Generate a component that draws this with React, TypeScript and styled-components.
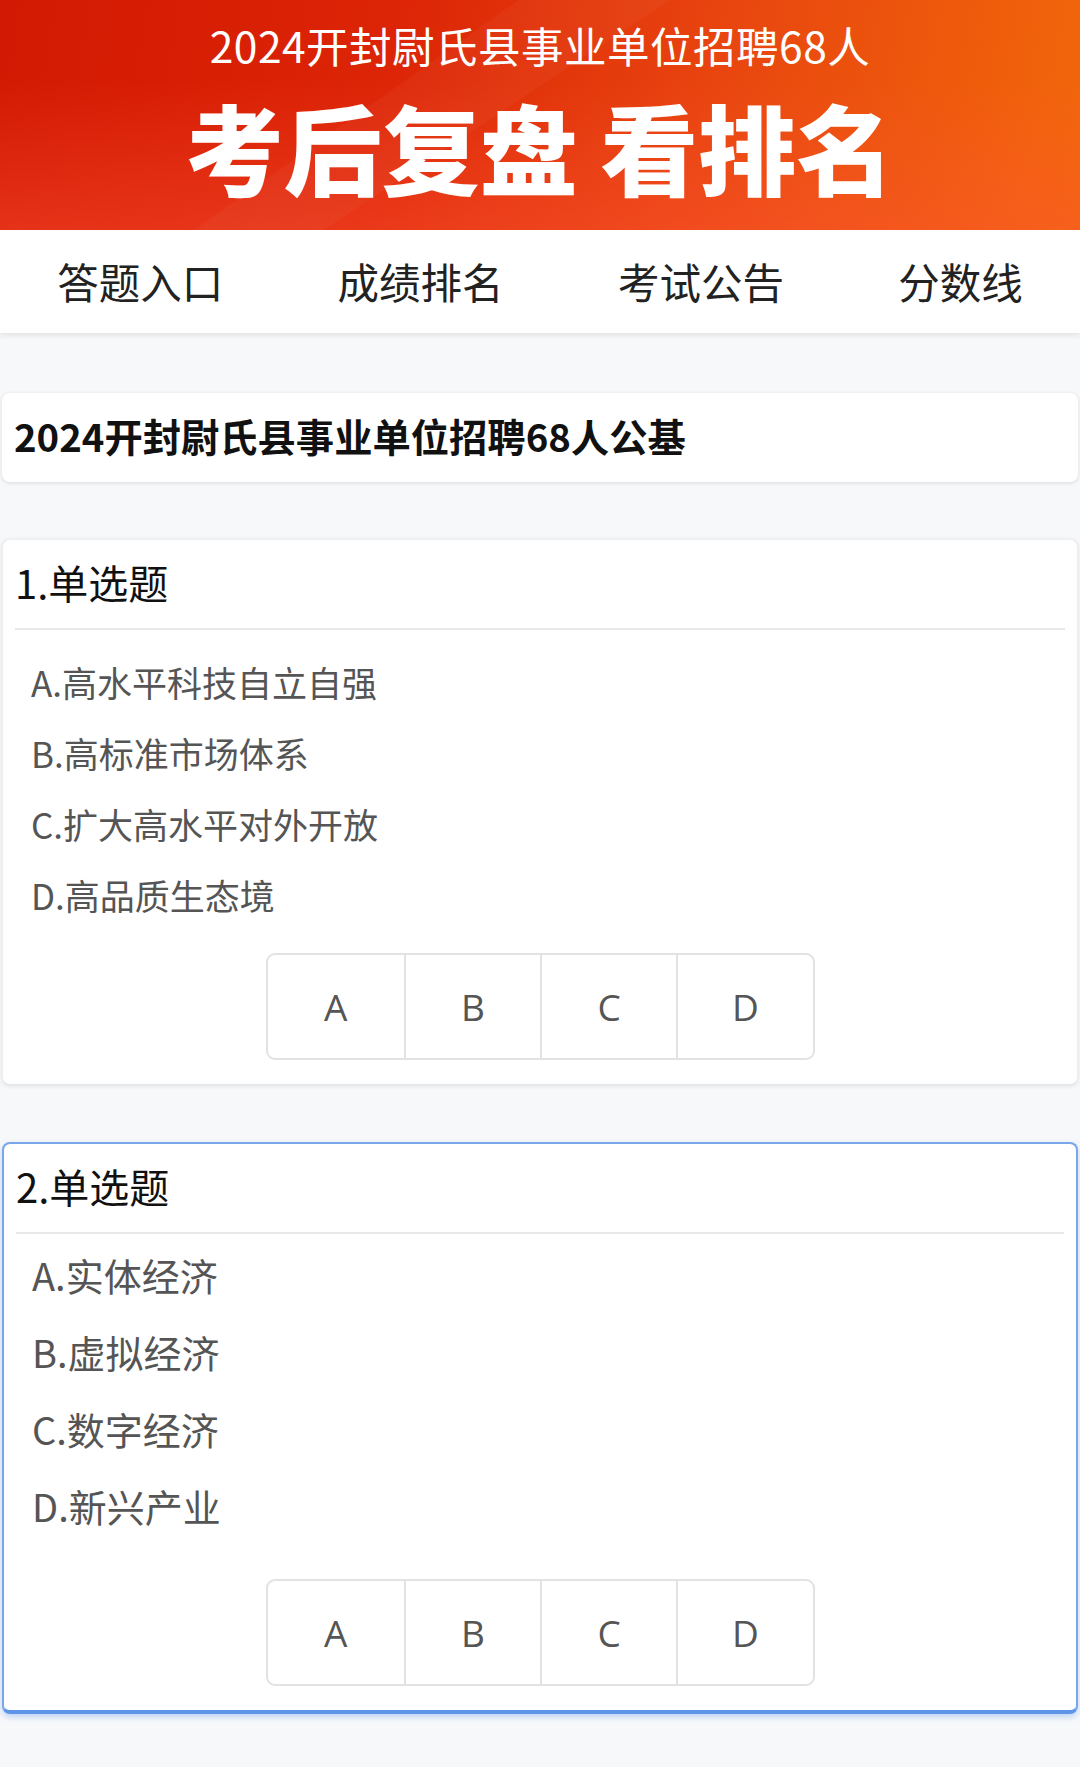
import React from 'react';
import styled, { createGlobalStyle } from 'styled-components';

const GlobalStyle = createGlobalStyle`
  * { box-sizing: border-box; }
  body {
    margin: 0;
    background: #f7f8fa;
    font-family: "Noto Sans CJK SC", "Noto Sans", sans-serif;
  }
`;

type Question = {
  no: number;
  options: string[];
  optSize: number;
  rowHeight: number;
  listTop: number;
  listBottom: number;
  active?: boolean;
};

const questions: Question[] = [
  {
    no: 1,
    options: ['A.高水平科技自立自强', 'B.高标准市场体系', 'C.扩大高水平对外开放', 'D.高品质生态境'],
    optSize: 35,
    rowHeight: 71,
    listTop: 16,
    listBottom: 23,
  },
  {
    no: 2,
    options: ['A.实体经济', 'B.虚拟经济', 'C.数字经济', 'D.新兴产业'],
    optSize: 38,
    rowHeight: 77,
    listTop: 2,
    listBottom: 35,
    active: true,
  },
];

const tabs = ['答题入口', '成绩排名', '考试公告', '分数线'];

export default function App() {
  return (
    <Page>
      <GlobalStyle />
      <Banner>
        <Facet />
        <BannerSub>2024开封尉氏县事业单位招聘68人</BannerSub>
        <BannerTitle>考后复盘 看排名</BannerTitle>
      </Banner>

      <Nav>
        {tabs.map((t) => (
          <NavItem key={t}>{t}</NavItem>
        ))}
      </Nav>

      <Body>
        <TitleCard>2024开封尉氏县事业单位招聘68人公基</TitleCard>

        {questions.map((q) => (
          <QuestionCard key={q.no} $active={q.active}>
            <QHead>{q.no}.单选题</QHead>
            <Divider />
            <OptionList $top={q.listTop} $bottom={q.listBottom}>
              {q.options.map((o) => (
                <Option key={o} $size={q.optSize} $h={q.rowHeight}>
                  {o}
                </Option>
              ))}
            </OptionList>
            <Choices>
              {['A', 'B', 'C', 'D'].map((c) => (
                <Choice key={c}>{c}</Choice>
              ))}
            </Choices>
          </QuestionCard>
        ))}
      </Body>
    </Page>
  );
}

const Page = styled.div`
  min-height: 1767px;
  background: #f7f8fa;
`;

const Banner = styled.header`
  position: relative;
  height: 230px;
  overflow: hidden;
  display: flex;
  flex-direction: column;
  align-items: center;
  color: #fff;
  background:
    linear-gradient(180deg, rgba(255, 80, 50, 0) 35%, rgba(255, 85, 55, 0.4) 100%),
    linear-gradient(100deg, #d21903 0%, #dc2406 35%, #e8450f 65%, #f2680a 100%);
`;

const Facet = styled.div`
  position: absolute;
  inset: 0;
  background: rgba(255, 255, 255, 0.035);
  clip-path: polygon(48% 0, 62% 0, 30% 100%, 18% 100%);
`;

const BannerSub = styled.div`
  position: relative;
  margin-top: 17px;
  font-size: 42.5px;
  line-height: 56px;
  letter-spacing: 0.5px;
  font-weight: 400;
`;

const BannerTitle = styled.h1`
  position: relative;
  margin: 12px 0 0;
  font-size: 98px;
  line-height: 120px;
  font-weight: 900;
  letter-spacing: 0;
`;

const Nav = styled.nav`
  height: 103px;
  background: #fff;
  display: flex;
  align-items: center;
  justify-content: space-around;
  box-shadow: 0 3px 5px rgba(0, 0, 0, 0.08);
`;

const NavItem = styled.div`
  font-size: 41.5px;
  color: #222;
  line-height: 1;
`;

const Body = styled.main`
  padding: 60px 2px 54px;
  display: flex;
  flex-direction: column;
  gap: 57px;
`;

const TitleCard = styled.div`
  height: 89px;
  display: flex;
  align-items: center;
  padding: 0 12px 4px;
  background: #fff;
  border-radius: 8px;
  box-shadow: 0 1px 4px rgba(0, 0, 0, 0.12);
  font-size: 38.3px;
  font-weight: 700;
  color: #111;
`;

const QuestionCard = styled.section<{ $active?: boolean }>`
  background: #fff;
  border-radius: 8px;
  border: ${(p) => (p.$active ? '2px solid #7aa6ea' : '1px solid #eceef1')};
  border-bottom-width: ${(p) => (p.$active ? '4px' : '1px')};
  border-bottom-color: ${(p) => (p.$active ? '#5f95e8' : '#e6e8eb')};
  box-shadow: ${(p) =>
    p.$active ? '0 3px 6px rgba(80, 140, 230, 0.35)' : '0 1px 4px rgba(0, 0, 0, 0.1)'};
  display: flex;
  flex-direction: column;
`;

const QHead = styled.h2`
  margin: 0;
  height: 88px;
  display: flex;
  align-items: center;
  padding: 0 12px 4px;
  font-size: 40px;
  font-weight: 400;
  color: #111;
`;

const Divider = styled.hr`
  margin: 0 12px;
  border: none;
  border-top: 2px solid #e8e8e8;
`;

const OptionList = styled.div<{ $top: number; $bottom: number }>`
  padding: ${(p) => p.$top}px 0 ${(p) => p.$bottom}px 28px;
`;

const Option = styled.div<{ $size: number; $h: number }>`
  height: ${(p) => p.$h}px;
  display: flex;
  align-items: center;
  font-size: ${(p) => p.$size}px;
  color: #555;
`;

const Choices = styled.div`
  align-self: center;
  width: 549px;
  height: 107px;
  margin-bottom: 24px;
  display: grid;
  grid-template-columns: repeat(4, 1fr);
  border: 2px solid #e2e2e2;
  border-radius: 9px;
  overflow: hidden;
`;

const Choice = styled.div`
  display: flex;
  align-items: center;
  justify-content: center;
  font-family: "Open Sans", "Noto Sans", sans-serif;
  font-size: 37px;
  color: #555;
  & + & {
    border-left: 2px solid #e2e2e2;
  }
`;
